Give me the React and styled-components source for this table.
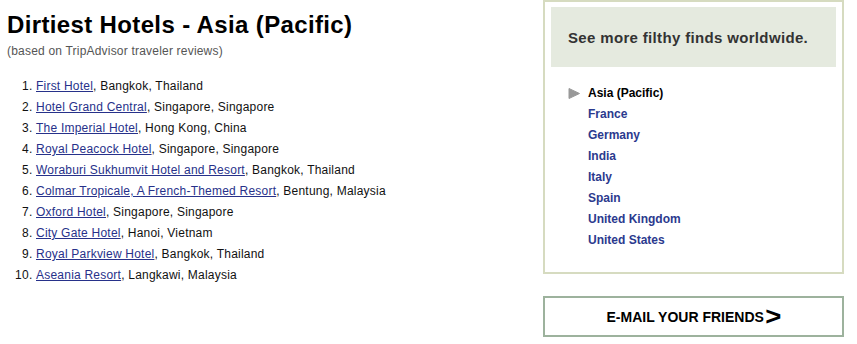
import React from 'react';
import styled, { createGlobalStyle } from 'styled-components';

const GlobalStyle = createGlobalStyle`
    body {
        margin: 0;
        background: #fff;
        font-family: "Liberation Sans", Arial, sans-serif;
    }
`;

const Page = styled.div`
    display: flex;
    align-items: flex-start;
    justify-content: space-between;
    width: 857px;
    padding: 0 13px 0 7px;
    box-sizing: border-box;
`;

const Main = styled.div`
    padding-top: 11px;
`;

const Title = styled.h1`
    margin: 0;
    font-size: 24px;
    line-height: 28px;
    font-weight: bold;
    letter-spacing: 0.36px;
    color: #000;
`;

const Subtitle = styled.div`
    margin-top: 5px;
    font-size: 12px;
    line-height: 14px;
    letter-spacing: 0.2px;
    color: #555;
`;

const HotelList = styled.ol`
    margin: 18px 0 0;
    padding-left: 29px;
    font-size: 12px;
    line-height: 21px;
    letter-spacing: 0.22px;
    color: #111;
`;

const HotelLink = styled.a`
    color: #27318a;
    text-decoration: underline;
    cursor: pointer;
`;

const Side = styled.div`
    display: flex;
    flex-direction: column;
    gap: 22px;
    width: 301px;
`;

const Panel = styled.div`
    border: 2px solid #d6dbc0;
    padding: 5px 6px 21px;
`;

const PanelHead = styled.div`
    display: flex;
    align-items: center;
    height: 60px;
    padding-left: 17px;
    background: #e5eadf;
    font-size: 15px;
    font-weight: bold;
    letter-spacing: 0.34px;
    color: #333;
`;

const RegionList = styled.ul`
    list-style: none;
    margin: 16px 0 0;
    padding: 0 0 0 37px;
    font-size: 12px;
    line-height: 21px;
    font-weight: bold;
`;

const Region = styled.li`
    position: relative;
    color: ${({ $active }) => ($active ? '#000' : '#2b3a8e')};
`;

const Marker = styled.svg`
    position: absolute;
    left: -20px;
    top: 5px;
`;

const MailButton = styled.button`
    display: flex;
    align-items: center;
    justify-content: center;
    gap: 2px;
    height: 41px;
    padding: 0;
    border: 2px solid #9db29d;
    background: #fff;
    font-family: inherit;
    font-size: 14px;
    font-weight: bold;
    color: #000;
    cursor: pointer;
`;

const Chevron = styled.span`
    font-size: 25px;
    line-height: 1;
    transform: scaleX(1.1);
`;

const hotels = [
    ['First Hotel', 'Bangkok, Thailand'],
    ['Hotel Grand Central', 'Singapore, Singapore'],
    ['The Imperial Hotel', 'Hong Kong, China'],
    ['Royal Peacock Hotel', 'Singapore, Singapore'],
    ['Woraburi Sukhumvit Hotel and Resort', 'Bangkok, Thailand'],
    ['Colmar Tropicale, A French-Themed Resort', 'Bentung, Malaysia'],
    ['Oxford Hotel', 'Singapore, Singapore'],
    ['City Gate Hotel', 'Hanoi, Vietnam'],
    ['Royal Parkview Hotel', 'Bangkok, Thailand'],
    ['Aseania Resort', 'Langkawi, Malaysia'],
];

const regions = ['Asia (Pacific)', 'France', 'Germany', 'India', 'Italy', 'Spain', 'United Kingdom', 'United States'];

export default function App() {
    return (
        <>
            <GlobalStyle />
            <Page>
                <Main>
                    <Title>Dirtiest Hotels - Asia (Pacific)</Title>
                    <Subtitle>(based on TripAdvisor traveler reviews)</Subtitle>
                    <HotelList>
                        {hotels.map(([name, place]) => (
                            <li key={name}>
                                <HotelLink>{name}</HotelLink>, {place}
                            </li>
                        ))}
                    </HotelList>
                </Main>
                <Side>
                    <Panel>
                        <PanelHead>See more filthy finds worldwide.</PanelHead>
                        <RegionList>
                            {regions.map((r, i) => (
                                <Region key={r} $active={i === 0}>
                                    {i === 0 && (
                                        <Marker width="12" height="11" viewBox="0 0 12 11">
                                            <path d="M1 0.5 L11.5 5.5 L1 10.5 Z" fill="#999" stroke="#999" strokeLinejoin="round" />
                                        </Marker>
                                    )}
                                    {r}
                                </Region>
                            ))}
                        </RegionList>
                    </Panel>
                    <MailButton>
                        E-MAIL YOUR FRIENDS<Chevron>&gt;</Chevron>
                    </MailButton>
                </Side>
            </Page>
        </>
    );
}
